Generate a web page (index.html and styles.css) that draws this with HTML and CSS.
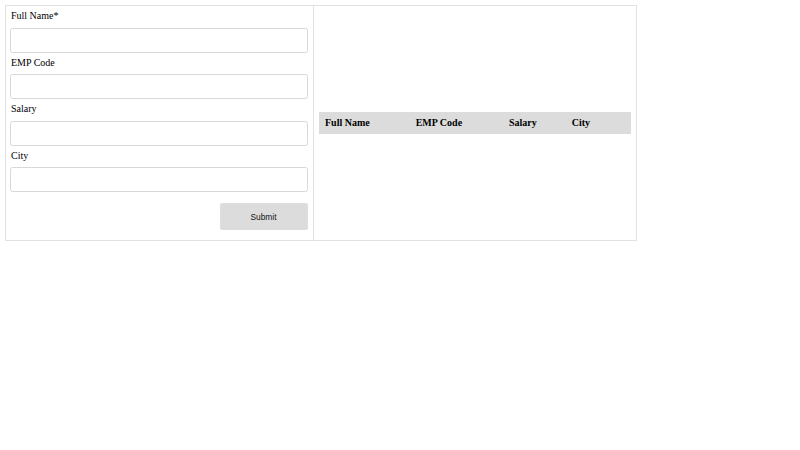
FILE: index.html
```html
<!DOCTYPE html>
<html lang="en">
<head>
    <meta charset="UTF-8">
    <meta name="viewport" content="width=device-width, initial-scale=1.0">
    <title>Employee Form</title>
    <link rel="stylesheet" href="styles.css">
</head>
<body>

    <div class="wrap">
        <!-- Form side -->
        <form class="form-col" onsubmit="return false">
            <label for="fullName">Full Name*</label>
            <input type="text" id="fullName">

            <label for="empCode">EMP Code</label>
            <input type="text" id="empCode">

            <label for="salary">Salary</label>
            <input type="text" id="salary">

            <label for="city">City</label>
            <input type="text" id="city">

            <div class="actions">
                <button type="submit">Submit</button>
            </div>
        </form>

        <!-- List side -->
        <div class="list-col">
            <table class="emp-list">
                <thead>
                    <tr>
                        <th class="c-name">Full Name</th>
                        <th class="c-code">EMP Code</th>
                        <th class="c-salary">Salary</th>
                        <th class="c-city">City</th>
                    </tr>
                </thead>
                <tbody></tbody>
            </table>
        </div>
    </div>

</body>
</html>
```

FILE: styles.css
```css
body {
    margin: 5px;
    font-family: "Liberation Serif", "Times New Roman", serif;
    font-size: 10px;
    line-height: 12px;
    color: #000;
}
.wrap {
    display: flex;
    width: 632px;
    border: 1px solid #e2e2e2;
    box-sizing: border-box;
}
.form-col {
    width: 308px;
    box-sizing: border-box;
    padding: 4.3px 5.5px 10.5px 4px;
    border-right: 1px solid #e2e2e2;
    display: flex;
    flex-direction: column;
    flex-shrink: 0;
}
.form-col label {
    display: block;
    height: 12px;
    margin-bottom: 5.5px;
    padding-left: 1px;
}
.form-col input {
    display: block;
    width: 100%;
    height: 25px;
    box-sizing: border-box;
    margin: 0 0 4px 0;
    border: 1px solid #d8d8d8;
    border-radius: 2.5px;
    padding: 0 6px;
    font-size: 10px;
}
.actions {
    display: flex;
    justify-content: flex-end;
    margin-top: 7px;
}
.actions button {
    width: 88px;
    height: 26.5px;
    border: 1px solid #dedede;
    border-radius: 2px;
    background-color: #dcdcdc;
    font-family: "Liberation Sans", Arial, sans-serif;
    font-size: 8.4px;
    color: #111;
    cursor: pointer;
}
.list-col {
    flex: 1;
    display: flex;
    align-items: center;
    padding: 0 5px;
}
.emp-list {
    width: 100%;
    border-collapse: collapse;
    table-layout: fixed;
}
.emp-list thead tr {
    background-color: #dcdcdc;
}
.emp-list th {
    text-align: left;
    font-weight: bold;
    padding: 5px 0 5px 6px;
    line-height: 12px;
}
.c-name { width: 84.7px; }
.c-code { width: 87.3px; }
.c-salary { width: 56.7px; }
```
